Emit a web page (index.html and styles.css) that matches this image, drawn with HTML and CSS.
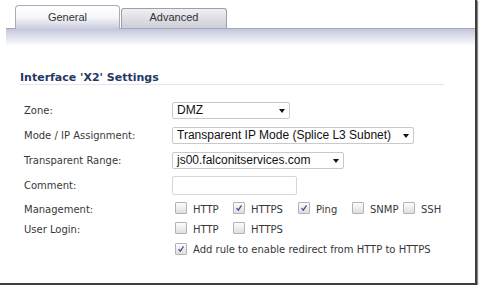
FILE: index.html
```html
<!DOCTYPE html>
<html>
<head>
<meta charset="utf-8">
<link rel="stylesheet" href="styles.css">
</head>
<body>
<div class="frame">
  <div class="tabs">
    <div class="tab active">General</div>
    <div class="tab">Advanced</div>
  </div>
  <div class="band"></div>
  <h2 class="heading">Interface 'X2' Settings</h2>
  <div class="form">
    <div class="row r1">
      <div class="label">Zone:</div>
      <div class="select w1"><span>DMZ</span><i class="arrow"></i></div>
    </div>
    <div class="row r2">
      <div class="label">Mode / IP Assignment:</div>
      <div class="select w2"><span>Transparent IP Mode (Splice L3 Subnet)</span><i class="arrow"></i></div>
    </div>
    <div class="row r3">
      <div class="label">Transparent Range:</div>
      <div class="select w3"><span>js00.falconitservices.com</span><i class="arrow"></i></div>
    </div>
    <div class="row r4">
      <div class="label">Comment:</div>
      <div class="input"></div>
    </div>
    <div class="row r5">
      <div class="label">Management:</div>
      <div class="checks">
        <div class="opt"><span class="box"></span>HTTP</div>
        <div class="opt"><span class="box"><svg viewBox="0 0 12 12"><path d="M3 6.2 L5.2 8.6 L9 2.8" /></svg></span>HTTPS</div>
        <div class="opt"><span class="box"><svg viewBox="0 0 12 12"><path d="M3 6.2 L5.2 8.6 L9 2.8" /></svg></span>Ping</div>
        <div class="opt"><span class="box"></span>SNMP</div>
        <div class="opt"><span class="box"></span>SSH</div>
      </div>
    </div>
    <div class="row r6">
      <div class="label">User Login:</div>
      <div class="checks">
        <div class="opt"><span class="box"></span>HTTP</div>
        <div class="opt"><span class="box"></span>HTTPS</div>
      </div>
    </div>
    <div class="row r7">
      <div class="label"></div>
      <div class="opt"><span class="box"><svg viewBox="0 0 12 12"><path d="M3 6.2 L5.2 8.6 L9 2.8" /></svg></span>Add rule to enable redirect from HTTP to HTTPS</div>
    </div>
  </div>
</div>
</body>
</html>
```
FILE: styles.css
```css
html, body {
  margin: 0;
  padding: 0;
  background: #fff;
}

.frame {
  width: 475px;
  height: 283px;
  border-right: 2px solid #3d3d3d;
  border-bottom: 2px solid #3d3d3d;
  box-shadow: 1px 1px 1px #8a8a8a;
  overflow: hidden;
  font-family: "DejaVu Sans", Verdana, sans-serif;
}

.tabs {
  display: flex;
  align-items: flex-end;
  gap: 1px;
  height: 23px;
  padding: 5px 0 0 15px;
}

.tab {
  box-sizing: border-box;
  font: 11px/13px "Liberation Sans", Arial, sans-serif;
  color: #333;
  text-align: center;
}

.tab.active {
  width: 105px;
  height: 24px;
  margin-bottom: -1px;
  padding-top: 5px;
  border: 1px solid #a9abb8;
  border-bottom: none;
  border-radius: 4px 4px 0 0;
  background: linear-gradient(#ffffff, #f6f6f9 50%, #c8cbde);
  position: relative;
  z-index: 1;
}

.tab:not(.active) {
  width: 106px;
  height: 20px;
  padding-top: 2px;
  border: 1px solid #9c9ea9;
  border-bottom: none;
  border-radius: 3px 3px 0 0;
  background: linear-gradient(#f0f0f2, #cdced7);
}

.band {
  margin-left: 6px;
  height: 17px;
  border-top: 1px solid #a5a8b8;
  background: linear-gradient(#c3c7db, #e6e8f1 60%, #ffffff);
}

.heading {
  margin: 26px 0 0 20px;
  width: 424px;
  font: bold 11px/12px "DejaVu Sans", Verdana, sans-serif;
  color: #1f3864;
  border-bottom: 1px solid #e6e6e6;
}

.form {
  margin-top: 17px;
  padding-left: 24px;
}

.row {
  display: flex;
  align-items: center;
}

.r1, .r2, .r3 { height: 17px; }
.r2, .r3 { margin-top: 8px; }
.r4 { height: 19px; margin-top: 7px; }
.r5 { height: 20px; margin-top: 4px; }
.r6 { height: 20px; }
.r7 { height: 21px; }

.label {
  width: 148px;
  flex: none;
  font-size: 10px;
  color: #383838;
}

.select {
  box-sizing: border-box;
  height: 17px;
  border: 1px solid #c9c9c9;
  border-radius: 2px;
  background: #fff;
  display: flex;
  align-items: center;
  justify-content: space-between;
  padding: 0 4px 0 4px;
  font: 12px/15px "Liberation Sans", Arial, sans-serif;
  color: #111;
}

.w1 { width: 118px; }
.w2 { width: 242px; }
.w3 { width: 172px; }

.arrow {
  width: 0;
  height: 0;
  border-left: 3px solid transparent;
  border-right: 3px solid transparent;
  border-top: 4px solid #111;
}

.input {
  box-sizing: border-box;
  width: 125px;
  height: 19px;
  border: 1px solid #d6d6d6;
  border-radius: 2px;
  background: #fff;
}

.checks {
  display: grid;
  grid-template-columns: 58px 65px 54px 51px auto;
}

.opt {
  display: flex;
  align-items: center;
  gap: 6px;
  margin-left: 3px;
  font-size: 10px;
  color: #383838;
  white-space: nowrap;
}

.box {
  box-sizing: border-box;
  width: 12px;
  height: 12px;
  flex: none;
  margin-top: -2px;
  border: 1px solid #b3b3b3;
  border-radius: 1px;
  background: linear-gradient(#fdfdfd, #dedede);
  display: flex;
}

.box svg {
  width: 10px;
  height: 10px;
}

.box path {
  fill: none;
  stroke: #3b4f95;
  stroke-width: 1.5;
}
```
